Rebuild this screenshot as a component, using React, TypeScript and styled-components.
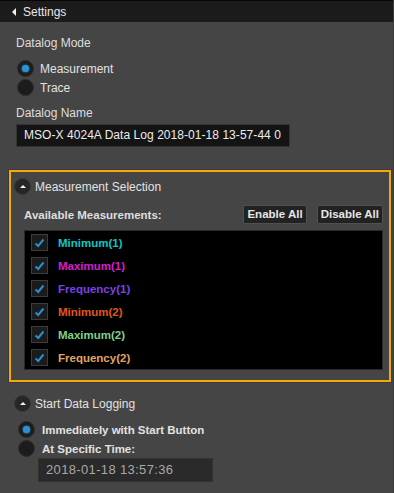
import * as React from 'react'
import styled, { createGlobalStyle } from 'styled-components'

const GlobalStyle = createGlobalStyle`
  html, body {
    margin: 0;
    padding: 0;
    background: #454545;
  }
  body {
    font-family: 'Liberation Sans', Arial, sans-serif;
    font-size: 12px;
    color: #e2e2e2;
  }
`

const Panel = styled.div`
  width: 394px;
  height: 493px;
  background: #454545;
  border-right: 1px solid #3c3c3c;
  box-sizing: border-box;
  overflow: hidden;
`

const Header = styled.div`
  height: 22px;
  box-sizing: border-box;
  background: #1b1b1b;
  border-top: 1px solid #050505;
  display: flex;
  align-items: center;
  padding-left: 12px;
  gap: 7px;
  font-size: 12px;
  color: #e8e8e8;
`

const BackArrow = styled.span`
  width: 0;
  height: 0;
  border-top: 4px solid transparent;
  border-bottom: 4px solid transparent;
  border-right: 4px solid #f0f0f0;
`

const Body = styled.div`
  padding: 13px 0 0 16px;
  display: flex;
  flex-direction: column;
`

const Label = styled.div<{ $bold?: boolean }>`
  height: 16px;
  line-height: 16px;
  font-size: ${p => (p.$bold ? '11.5px' : '12px')};
  font-weight: ${p => (p.$bold ? 'bold' : 'normal')};
  color: #dedede;
`

const RadioGroup = styled.div<{ $indent: number; $top: number }>`
  display: flex;
  flex-direction: column;
  margin: ${p => p.$top}px 0 0 ${p => p.$indent}px;
`

const RadioRow = styled.label<{ $bold?: boolean; $gap: number }>`
  height: 19px;
  display: flex;
  align-items: center;
  gap: ${p => p.$gap}px;
  font-size: ${p => (p.$bold ? '11.5px' : '12px')};
  font-weight: ${p => (p.$bold ? 'bold' : 'normal')};
  color: #e2e2e2;
`

const RadioDot = styled.span<{ $on?: boolean }>`
  width: 17px;
  height: 17px;
  box-sizing: border-box;
  border-radius: 50%;
  background: #1c1c1c;
  border: 1px solid #2e2e2e;
  display: flex;
  align-items: center;
  justify-content: center;
  &::after {
    content: '';
    display: ${p => (p.$on ? 'block' : 'none')};
    width: 7px;
    height: 7px;
    border-radius: 50%;
    background: #2b93d4;
    box-shadow: 0 0 2px #3aa6e6;
  }
`

const NameInput = styled.div`
  width: 274px;
  height: 23px;
  box-sizing: border-box;
  margin-top: 3px;
  background: #141414;
  border: 1px solid #333;
  padding-left: 7px;
  line-height: 21px;
  font-size: 12px;
  letter-spacing: 0.05px;
  color: #ececec;
  white-space: nowrap;
  overflow: hidden;
`

const SectionBox = styled.div`
  margin: 23px 0 0 -7px;
  width: 382px;
  box-sizing: border-box;
  border: 2px solid #f5a90a;
  outline: 1px solid #3a3a3a;
  padding: 6px 6px 10px 3px;
`

const SectionHead = styled.div`
  display: flex;
  align-items: center;
  gap: 4px;
  height: 17px;
  font-size: 12px;
  color: #e2e2e2;
`

const CollapseIcon = styled.span`
  width: 17px;
  height: 17px;
  box-sizing: border-box;
  border-radius: 50%;
  background: #262626;
  border: 1px solid #383838;
  display: flex;
  align-items: center;
  justify-content: center;
  &::after {
    content: '';
    width: 0;
    height: 0;
    border-left: 3px solid transparent;
    border-right: 3px solid transparent;
    border-bottom: 3px solid #f2f2f2;
    margin-top: -1px;
  }
`

const SectionContent = styled.div`
  margin: 10px 0 0 10px;
`

const ToolRow = styled.div`
  display: flex;
  align-items: center;
  height: 19px;
  gap: 10px;
`

const Spacer = styled.div`
  flex: 1;
`

const SmallButton = styled.button`
  height: 19px;
  padding: 0 3px;
  background: #222;
  border: 1px solid #505050;
  border-radius: 2px;
  color: #e6e6e6;
  font-family: 'Liberation Sans', Arial, sans-serif;
  font-size: 11.5px;
  font-weight: bold;
  line-height: 17px;
`

const MeasureList = styled.div`
  margin-top: 6px;
  background: #000;
  border: 1px solid #2a2a2a;
  display: flex;
  flex-direction: column;
`

const MeasureRow = styled.div<{ $color: string }>`
  height: 23px;
  display: flex;
  align-items: center;
  gap: 10px;
  padding-left: 6px;
  font-size: 11.5px;
  font-weight: bold;
  color: ${p => p.$color};
`

const CheckBox = styled.span`
  width: 17px;
  height: 17px;
  box-sizing: border-box;
  background: #1b1b1b;
  border: 1px solid #3c3c3c;
  display: flex;
  align-items: center;
  justify-content: center;
`

const StartSection = styled.div`
  margin: 13px 0 0 -2px;
`

const TimeInput = styled.div`
  margin-left: 24px;
  width: 175px;
  height: 24px;
  box-sizing: border-box;
  background: #2a2a2a;
  border: 1px solid #323232;
  padding-left: 7px;
  line-height: 22px;
  font-size: 13px;
  letter-spacing: 0.35px;
  color: #a8a8a8;
`

const Check = () => (
  <svg width="11" height="10" viewBox="0 0 11 10">
    <polyline points="1.5,5.5 4.2,8 9.5,1.5" fill="none" stroke="#2a8fd0" strokeWidth="2" />
  </svg>
)

const measurements = [
  { name: 'Minimum(1)', color: '#12c4c8' },
  { name: 'Maximum(1)', color: '#d21fd2' },
  { name: 'Frequency(1)', color: '#7a42e6' },
  { name: 'Minimum(2)', color: '#e0561c' },
  { name: 'Maximum(2)', color: '#7fd08c' },
  { name: 'Frequency(2)', color: '#e2a466' },
]

const App = () => {
  return (
    <Panel>
      <GlobalStyle />
      <Header>
        <BackArrow />
        <span>Settings</span>
      </Header>
      <Body>
        <Label>Datalog Mode</Label>
        <RadioGroup $indent={1} $top={8}>
          <RadioRow $gap={6}>
            <RadioDot $on />
            Measurement
          </RadioRow>
          <RadioRow $gap={6}>
            <RadioDot />
            Trace
          </RadioRow>
        </RadioGroup>
        <div style={{ height: 8 }} />
        <Label>Datalog Name</Label>
        <NameInput>MSO-X 4024A Data Log 2018-01-18 13-57-44 0</NameInput>

        <SectionBox>
          <SectionHead>
            <CollapseIcon />
            Measurement Selection
          </SectionHead>
          <SectionContent>
            <ToolRow>
              <Label $bold>Available Measurements:</Label>
              <Spacer />
              <SmallButton>Enable All</SmallButton>
              <SmallButton>Disable All</SmallButton>
            </ToolRow>
            <MeasureList>
              {measurements.map(m => (
                <MeasureRow key={m.name} $color={m.color}>
                  <CheckBox>
                    <Check />
                  </CheckBox>
                  {m.name}
                </MeasureRow>
              ))}
            </MeasureList>
          </SectionContent>
        </SectionBox>

        <StartSection>
          <SectionHead>
            <CollapseIcon />
            Start Data Logging
          </SectionHead>
          <RadioGroup $indent={4} $top={8}>
            <RadioRow $bold $gap={7}>
              <RadioDot $on />
              Immediately with Start Button
            </RadioRow>
            <RadioRow $bold $gap={7}>
              <RadioDot />
              At Specific Time:
            </RadioRow>
          </RadioGroup>
          <TimeInput>2018-01-18 13:57:36</TimeInput>
        </StartSection>
      </Body>
    </Panel>
  )
}

export default App
